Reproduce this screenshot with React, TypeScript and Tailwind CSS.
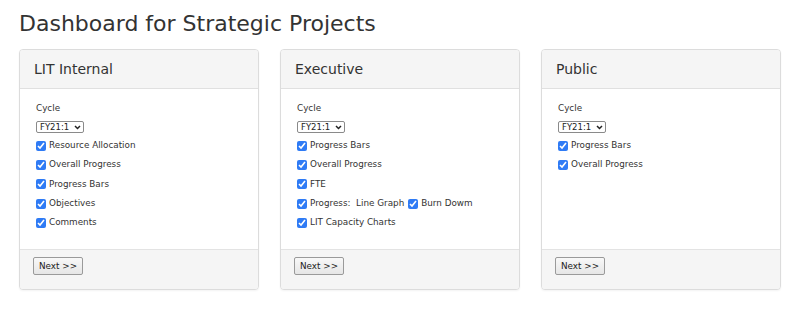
import React from 'react';

type Item = string[];

const panels: { title: string; items: Item[] }[] = [
  {
    title: 'LIT Internal',
    items: [['Resource Allocation'], ['Overall Progress'], ['Progress Bars'], ['Objectives'], ['Comments']],
  },
  {
    title: 'Executive',
    items: [['Progress Bars'], ['Overall Progress'], ['FTE'], ['Progress:\u00a0 Line Graph', 'Burn Dowm'], ['LIT Capacity Charts']],
  },
  {
    title: 'Public',
    items: [['Progress Bars'], ['Overall Progress']],
  },
];

function Check({ label }: { label: string }) {
  return (
    <label className="flex items-center gap-[3px]">
      <input type="checkbox" defaultChecked className="m-0 w-[10px] h-[10px] accent-[#2f7bf5]" />
      <span>{label}</span>
    </label>
  );
}

function Panel({ title, items }: { title: string; items: Item[] }) {
  return (
    <div className="flex flex-col rounded-[4px] border border-[#dcdcdc] bg-white shadow-[0_1px_2px_rgba(0,0,0,0.05)] overflow-hidden">
      <div className="h-[39px] flex items-center px-[14px] bg-[#f5f5f5] border-b border-[#e0e0e0] text-[14px] text-[#333]">
        {title}
      </div>
      <div className="flex-1 pl-[16px] pt-[13px] pb-[17px] text-[8.8px] text-[#333]">
        <div className="h-[12px] leading-[12px]">Cycle</div>
        <div className="relative mt-[7px] w-[48px] h-[12px]">
          <select className="appearance-none w-full h-full border border-[#8a8a8a] rounded-[2px] bg-white pl-[3px] text-[8.5px] leading-[10px] text-[#222]">
            <option>FY21:1</option>
          </select>
          <svg className="pointer-events-none absolute right-[3px] top-[4px]" width="7" height="5" viewBox="0 0 7 5">
            <path d="M1 1l2.5 2.5L6 1" fill="none" stroke="#222" strokeWidth="1.5" />
          </svg>
        </div>
        <div className="mt-[3px]">
          {items.map((row, i) => (
            <div key={i} className="h-[19.3px] flex items-center gap-[4px]">
              {row.map((l) => (
                <Check key={l} label={l} />
              ))}
            </div>
          ))}
        </div>
      </div>
      <div className="h-[40px] flex items-start bg-[#f5f5f5] border-t border-[#e3e3e3] px-[13px] pt-[7px]">
        <button className="h-[18px] px-[5px] leading-[16px] border border-[#9a9a9a] rounded-[2px] bg-gradient-to-b from-[#f8f8f8] to-[#e6e6e6] text-[8.8px] text-[#222]">
          Next &gt;&gt;
        </button>
      </div>
    </div>
  );
}

export default function App() {
  return (
    <div className="w-[800px] h-[311px] bg-white px-[19px] pt-[11px]" style={{ fontFamily: '"DejaVu Sans", Verdana, sans-serif' }}>
      <h1 className="h-[26px] leading-[26px] text-[22px] text-[#333] mb-[12px]">Dashboard for Strategic Projects</h1>
      <div className="grid grid-cols-3 gap-[21px]">
        {panels.map((p) => (
          <Panel key={p.title} {...p} />
        ))}
      </div>
    </div>
  );
}
